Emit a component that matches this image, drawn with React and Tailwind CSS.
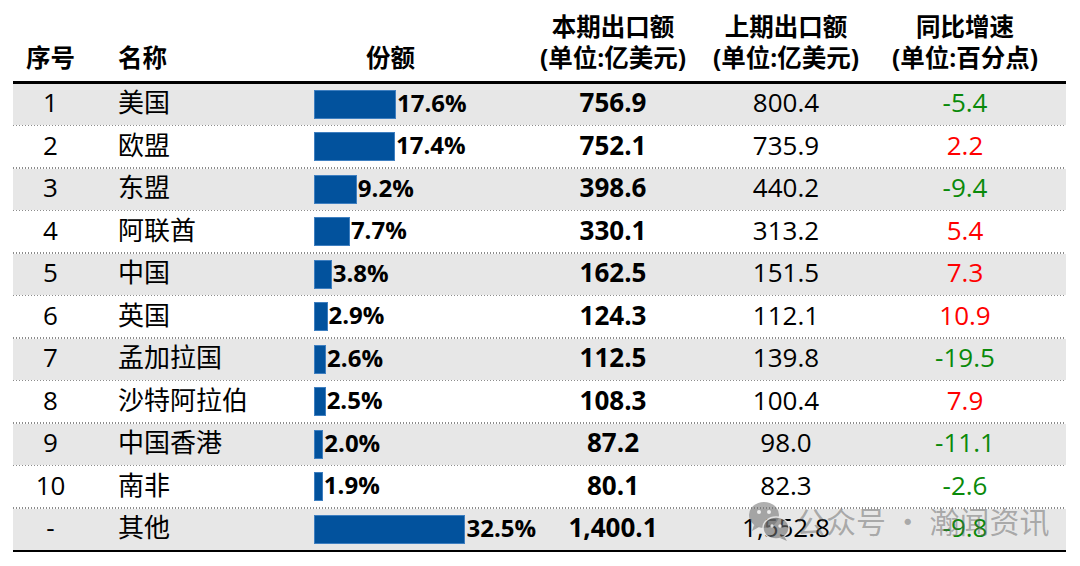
import React from "react";

const rows = [
  ["1", "美国", 17.6, "756.9", "800.4", "-5.4"],
  ["2", "欧盟", 17.4, "752.1", "735.9", "2.2"],
  ["3", "东盟", 9.2, "398.6", "440.2", "-9.4"],
  ["4", "阿联酋", 7.7, "330.1", "313.2", "5.4"],
  ["5", "中国", 3.8, "162.5", "151.5", "7.3"],
  ["6", "英国", 2.9, "124.3", "112.1", "10.9"],
  ["7", "孟加拉国", 2.6, "112.5", "139.8", "-19.5"],
  ["8", "沙特阿拉伯", 2.5, "108.3", "100.4", "7.9"],
  ["9", "中国香港", 2.0, "87.2", "98.0", "-11.1"],
  ["10", "南非", 1.9, "80.1", "82.3", "-2.6"],
  ["-", "其他", 32.5, "1,400.1", "1,552.8", "-9.8"],
];

const font = { fontFamily: '"Open Sans", "Noto Sans CJK SC", sans-serif' };

function WeChatIcon() {
  return (
    <svg width="44" height="44" viewBox="0 0 44 44">
      <ellipse cx="16" cy="16" rx="15" ry="13" fill="rgba(110,110,110,0.55)" />
      <path d="M6 26 L4 32 L11 28 Z" fill="rgba(110,110,110,0.55)" />
      <circle cx="11" cy="13" r="2" fill="rgba(255,255,255,0.8)" />
      <circle cx="21" cy="13" r="2" fill="rgba(255,255,255,0.8)" />
      <ellipse cx="28" cy="29" rx="13" ry="11" fill="rgba(110,110,110,0.6)" stroke="rgba(235,235,235,0.9)" strokeWidth="1.5" />
      <path d="M36 37 L39 42 L32 39 Z" fill="rgba(110,110,110,0.6)" />
      <circle cx="24" cy="27" r="1.7" fill="rgba(255,255,255,0.8)" />
      <circle cx="32" cy="27" r="1.7" fill="rgba(255,255,255,0.8)" />
    </svg>
  );
}

export default function App() {
  return (
    <div className="w-[1080px] h-[566px] bg-white text-black overflow-hidden" style={font}>
      <div className="ml-[13px] w-[1053px] relative">
        {/* header */}
        <div className="flex h-[81px] items-end pb-[8px] font-bold text-[24.5px] leading-[31px]">
          <div className="w-[75px] text-center">序号</div>
          <div className="w-[212px] pl-[30px]">名称</div>
          <div className="w-[235px] pl-[66px]">份额</div>
          <div className="w-[156px] text-center flex flex-col items-center">
            <span>本期出口额</span>
            <span className="whitespace-nowrap">(单位:亿美元)</span>
          </div>
          <div className="w-[190px] text-center flex flex-col items-center">
            <span>上期出口额</span>
            <span className="whitespace-nowrap">(单位:亿美元)</span>
          </div>
          <div className="w-[168px] text-center flex flex-col items-center">
            <span>同比增速</span>
            <span className="whitespace-nowrap">(单位:百分点)</span>
          </div>
        </div>
        <div className="h-[3px] bg-black" />
        {rows.map((r, i) => {
          const last = i === rows.length - 1;
          const gray = i % 2 === 0;
          const neg = r[5].startsWith("-");
          return (
            <div key={i} className="flex flex-col">
              <div
                className={`flex items-center h-[40.5px] pb-[3px] text-[26px] ${gray ? "bg-[#e7e7e7]" : "bg-white"}`}
              >
                <div className="w-[75px] text-center">{r[0]}</div>
                <div className="w-[212px] pl-[30px] whitespace-nowrap">{r[1]}</div>
                <div className="w-[235px] pl-[14px] flex items-center">
                  <div
                    className="h-[29px] mt-[3px] bg-[#02529d] border border-[#3f7fc0] shrink-0"
                    style={{ width: `${r[2] * 4.66}px` }}
                  />
                  <span className="font-bold ml-[1px] text-[24px]">{r[2].toFixed(1)}%</span>
                </div>
                <div className="w-[156px] text-center font-bold">{r[3]}</div>
                <div className="w-[190px] text-center">{r[4]}</div>
                <div className={`w-[168px] text-center ${neg ? "text-[#0a8a0a]" : "text-[#ff0000]"}`}>
                  {r[5]}
                </div>
              </div>
              {!last && (
                <div className="h-[2px] flex flex-col justify-center">
                  <div className="h-[1.5px] bg-[repeating-linear-gradient(90deg,#8c8c8c_0px,#8c8c8c_1.5px,transparent_1.5px,transparent_3px)]" />
                </div>
              )}
            </div>
          );
        })}
        <div className="h-[2px] bg-black" />
        {/* watermark */}
        <div className="absolute left-[735px] top-[498px] flex items-center gap-[4px] pointer-events-none">
          <WeChatIcon />
          <span
            className="text-[30px] text-[rgba(90,90,90,0.45)] whitespace-nowrap"
            style={{ fontFamily: '"Noto Sans CJK SC", sans-serif' }}
          >
            公众号 · 瀚闻资讯
          </span>
        </div>
      </div>
    </div>
  );
}
